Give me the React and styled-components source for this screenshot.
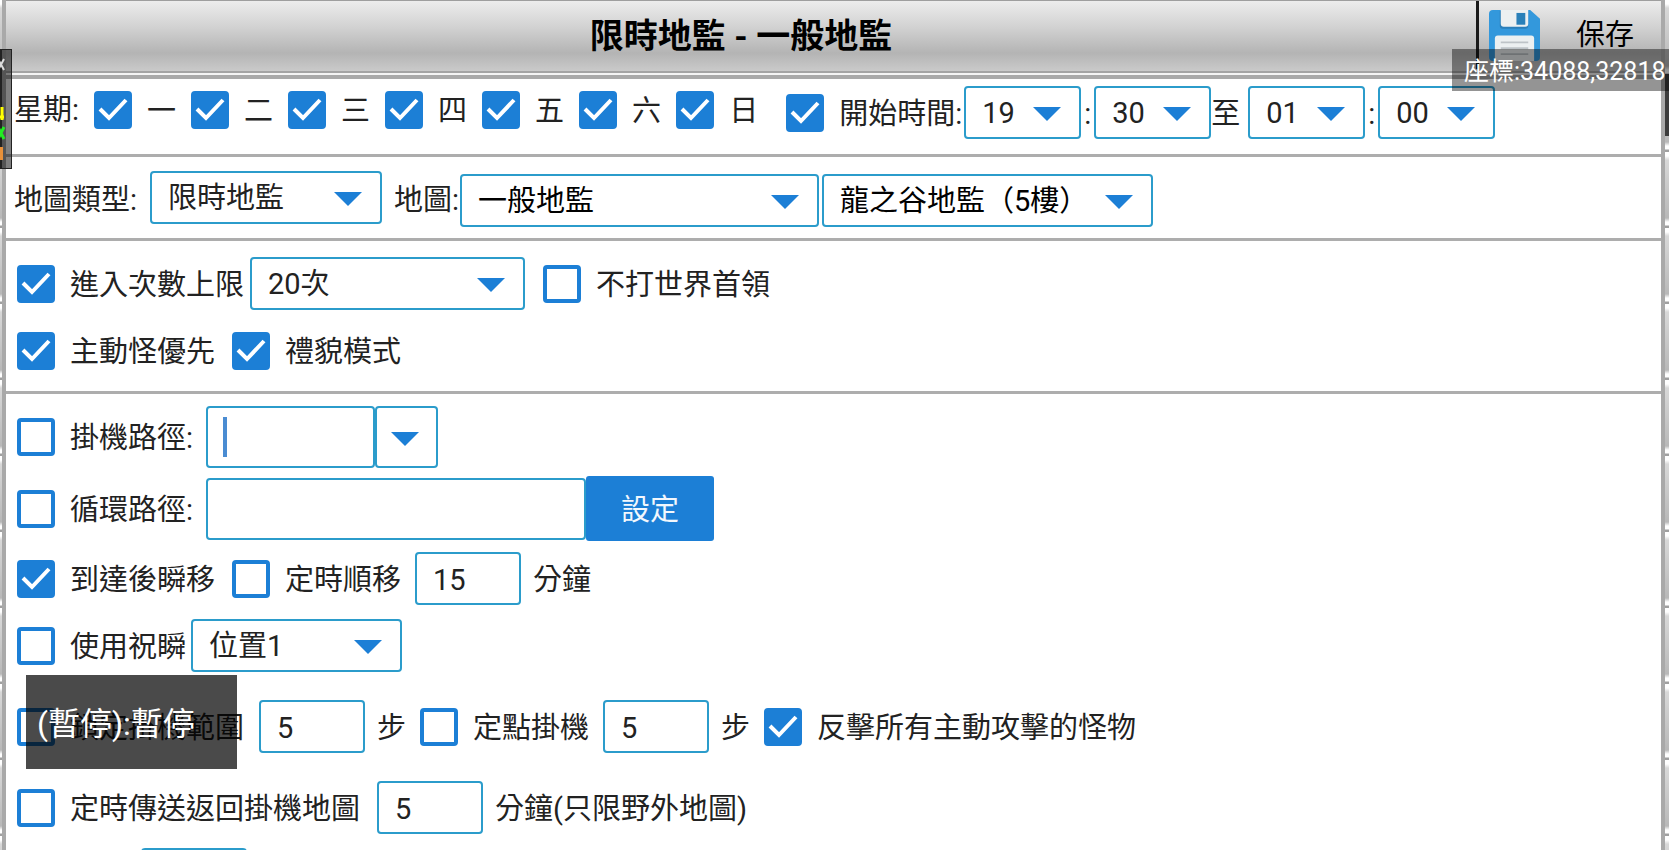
import React, { useState } from "react";
import styled, { createGlobalStyle, css } from "styled-components";

const blue = "#1c7fd6";
const edge = "#2b9ccb";
const rule = "#adadad";

const Global = createGlobalStyle`
  *, *::before, *::after { box-sizing: border-box; }
  html, body, #root { height: 100%; }
  body {
    margin: 0;
    overflow: hidden;
    background: #fff;
    color: #222;
    font: 400 29px/36px Roboto, "Noto Sans CJK TC", sans-serif;
  }
  button, input, select { font: inherit; color: inherit; margin: 0; }
`;

const Screen = styled.div`
  position: relative;
  display: flex;
  height: 100%;
  overflow: hidden;
`;

const Backdrop = styled.div`
  flex: 0 0 ${(p) => p.$w}px;
  background: repeating-linear-gradient(#fff 0 4px, #d8d8d8 8px, #b8b8b8 66px, #fff 70px 73px, #a0a0a0 74px 76px);
`;

const Dialog = styled.main`
  flex: 1;
  min-width: 0;
  border: solid #a9a9a9;
  border-width: 0 4px;
  background: #fff;
`;

const Header = styled.header`
  display: flex;
  height: 79px;
  border-top: 1px solid #9e9e9e;
  border-bottom: 4px solid #a9a9a9;
  background: linear-gradient(#ececec 0, #d2d2d2 26px, #b4b4b4 52px, #cacaca 70px, #a4a4a4 70px, #a4a4a4 72px, #f4f4f4 72px);
`;

const Title = styled.h1`
  flex: 1;
  margin: 0;
  text-align: center;
  font-size: 34px;
  font-weight: 700;
  line-height: 70px;
  color: #000;
`;

const SaveButton = styled.button`
  display: flex;
  align-items: center;
  justify-content: space-between;
  width: 185px;
  height: 68px;
  padding: 0 27px 0 10px;
  border: 0;
  border-left: 3px solid #1a1a1a;
  background: none;
  color: #000;
`;

const Section = styled.section`
  padding: ${(p) => p.$pad};
  border-bottom: ${(p) => (p.$last ? 0 : 3)}px solid ${rule};
`;

const Line = styled.div`
  display: flex;
  align-items: ${(p) => p.$align || "center"};
  min-height: ${(p) => p.$h || 53}px;
  margin-top: ${(p) => p.$gap || 0}px;
  white-space: nowrap;
`;

const Days = styled.fieldset`
  display: flex;
  align-items: center;
  gap: 15px;
  height: 48px;
  margin: 0 28px 0 0;
  padding: 0;
  border: 0;
`;

const Group = styled.div`
  display: flex;
  align-items: center;
  height: 53px;
`;

const Caption = styled.label`
  min-width: ${(p) => p.$w || 0}px;
  margin-left: ${(p) => p.$ml || 0}px;
  padding-top: 2px;
  text-align: ${(p) => p.$align || "left"};
`;

const Choice = styled.label`
  display: flex;
  align-items: center;
  gap: 15px;
  margin-right: ${(p) => p.$mr || 0}px;
`;

const ChoiceText = styled.span`
  min-width: ${(p) => p.$w || 0}px;
  padding-top: 2px;
`;

const Tick = styled.span`
  position: relative;
  display: block;
  width: 38px;
  height: 38px;

  input {
    appearance: none;
    display: block;
    width: 38px;
    height: 38px;
    border: 4px solid ${blue};
    border-radius: 4px;
    background: #fff;
  }
  input:checked { background: ${blue}; }
  svg {
    position: absolute;
    inset: 0;
    pointer-events: none;
    visibility: hidden;
  }
  input:checked + svg { visibility: visible; }
`;

const box = css`
  border: 2px solid ${edge};
  border-radius: 4px;
  background: #fff;
  outline: 0;
`;

const SelectWrap = styled.span`
  position: relative;
  display: block;
  width: ${(p) => p.$w}px;
  align-self: ${(p) => p.$align || "center"};
  margin-left: ${(p) => p.$ml || 0}px;
  color: ${(p) => (p.$dark ? "#000" : "#222")};

  select {
    ${box}
    appearance: none;
    display: block;
    width: 100%;
    height: 53px;
    padding: 0 48px 0 16px;
  }
  svg {
    position: absolute;
    right: 20px;
    top: 21px;
    pointer-events: none;
  }
`;

const Field = styled.input`
  ${box}
  width: ${(p) => p.$w || 106}px;
  height: ${(p) => p.$h || 53}px;
  margin-left: ${(p) => p.$ml || 0}px;
  padding: 2px 16px 0;
`;

const CaretField = styled.span`
  position: relative;
  display: block;

  &::after {
    content: "";
    position: absolute;
    left: 17px;
    top: 11px;
    width: 4px;
    height: 40px;
    background: #4a8cd2;
  }
`;

const DropButton = styled.button`
  ${box}
  display: flex;
  align-items: center;
  justify-content: center;
  width: 63px;
  height: 62px;
  padding: 4px 4px 0 0;
`;

const SetButton = styled.button`
  width: 128px;
  height: 65px;
  padding: 2px 0 0;
  border: 0;
  border-radius: 3px;
  background: ${blue};
  color: #f2f7fd;
`;

const Coords = styled.output`
  position: absolute;
  top: 49px;
  right: 0;
  width: 217px;
  height: 42px;
  padding: 0 12px;
  background: rgba(0, 0, 0, 0.42);
  color: #fff;
  font-size: 25px;
  line-height: 46px;
  white-space: nowrap;
`;

const Toast = styled.div`
  position: absolute;
  left: 26px;
  top: 675px;
  width: 211px;
  height: 94px;
  padding: 0 11px;
  background: rgba(0, 0, 0, 0.71);
  color: #fff;
  font-size: 32px;
  line-height: 98px;
  white-space: nowrap;
`;

const MiniPanel = styled.aside`
  position: absolute;
  left: -20px;
  top: 49px;
  width: 32px;
  height: 120px;
  border: 1px solid #222;
  background: linear-gradient(90deg, #222 0 21px, rgba(0, 0, 0, 0.5) 21px);
  overflow: hidden;

  svg { display: block; }
`;

const RightPanel = styled.aside`
  position: absolute;
  right: 0;
  top: 74px;
  width: 4px;
  height: 62px;
  background: #3c3c3c;
`;

const Arrow = () => (
  <svg width="28" height="14" viewBox="0 0 28 14" aria-hidden="true">
    <path d="M0 0H28L14 14Z" fill={blue} />
  </svg>
);

const Disk = () => (
  <svg width="51" height="51" viewBox="0 0 52 52" aria-hidden="true">
    <path d="M4 0H42L52 9V48Q52 52 48 52H4Q0 52 0 48V4Q0 0 4 0Z" fill="#3398dc" />
    <path d="M11 1H40V16Q40 19 37 19H14Q11 19 11 16Z" fill="#2a7fba" />
    <path d="M12 0H40V14Q40 17 37 17H15Q12 17 12 14Z" fill="#ecf0f1" />
    <rect x="28" y="3" width="9" height="12" fill="#2980b9" />
    <path d="M6 52V29Q6 26 9 26H43Q46 26 46 29V52Z" fill="#ecf0f1" />
    <path d="M12 33H40M12 39H40M12 45H40" stroke="#bdc3c7" strokeWidth="2" />
  </svg>
);

function Check({ label, on, w, mr }) {
  const [checked, setChecked] = useState(!!on);
  return (
    <Choice $mr={mr}>
      <Tick>
        <input type="checkbox" checked={checked} onChange={(e) => setChecked(e.target.checked)} />
        <svg width="38" height="38" viewBox="0 0 38 38" aria-hidden="true">
          <path d="M6 18L15 27L32 9" fill="none" stroke="#fff" strokeWidth="4" />
        </svg>
      </Tick>
      <ChoiceText $w={w}>{label}</ChoiceText>
    </Choice>
  );
}

function Select({ id, name, value, w, ml, dark, align }) {
  return (
    <SelectWrap $w={w} $ml={ml} $dark={dark} $align={align}>
      <select id={id} aria-label={name} defaultValue={value}>
        <option>{value}</option>
      </select>
      <Arrow />
    </SelectWrap>
  );
}

export default function App() {
  return (
    <>
      <Global />
      <Screen>
        <Backdrop $w={2} />
        <Dialog>
          <Header>
            <Title>限時地監 - 一般地監</Title>
            <SaveButton type="button">
              <Disk />
              <span>保存</span>
            </SaveButton>
          </Header>

          <Section $pad="7px 8px 15px">
            <Line $align="flex-start">
              <Days>
                <span>星期:</span>
                {["一", "二", "三", "四", "五", "六", "日"].map((d) => (
                  <Check key={d} label={d} on />
                ))}
              </Days>
              <Group>
                <Check label="開始時間:" on w={125} />
                <Select name="開始時" value="19" w={117} />
                <Caption as="span" $w={13} $align="center">:</Caption>
                <Select name="開始分" value="30" w={117} />
                <Caption as="span" $w={37}>至</Caption>
                <Select name="結束時" value="01" w={117} />
                <Caption as="span" $w={13} $align="center">:</Caption>
                <Select name="結束分" value="00" w={117} />
              </Group>
            </Line>
          </Section>

          <Section $pad="14px 8px 11px">
            <Line $h={56}>
              <Caption htmlFor="kind" $w={136}>地圖類型:</Caption>
              <Select id="kind" value="限時地監" w={232} align="flex-start" />
              <Caption htmlFor="map" $w={66} $ml={12}>地圖:</Caption>
              <Select id="map" value="一般地監" w={359} dark align="flex-end" />
              <Select name="樓層" value="龍之谷地監（5樓）" w={331} ml={3} dark align="flex-end" />
            </Line>
          </Section>

          <Section $pad="16px 11px 14px">
            <Line>
              <Check label="進入次數上限" on w={180} />
              <Select name="次數" value="20次" w={275} />
              <Caption as="span" $w={18} />
              <Check label="不打世界首領" />
            </Line>
            <Line $gap={14}>
              <Check label="主動怪優先" on w={147} mr={15} />
              <Check label="禮貌模式" on />
            </Line>
          </Section>

          <Section $pad="12px 11px" $last>
            <Line $h={62}>
              <Check label="掛機路徑:" w={136} />
              <CaretField>
                <Field $w={169} $h={62} aria-label="掛機路徑" />
              </CaretField>
              <DropButton type="button" aria-label="選擇路徑">
                <Arrow />
              </DropButton>
            </Line>
            <Line $h={65} $gap={8}>
              <Check label="循環路徑:" w={136} />
              <Field $w={380} $h={62} aria-label="循環路徑" />
              <SetButton type="button">設定</SetButton>
            </Line>
            <Line $gap={11}>
              <Check label="到達後瞬移" on w={147} mr={15} />
              <Check label="定時順移" w={118} />
              <Field $ml={12} defaultValue="15" aria-label="分鐘" />
              <Caption as="span" $ml={12}>分鐘</Caption>
            </Line>
            <Line $gap={14}>
              <Check label="使用祝瞬" w={121} />
              <Select name="位置" value="位置1" w={211} />
            </Line>
            <Line $gap={28}>
              <Check label="鎖定掛機範圍" w={177} />
              <Field $ml={12} defaultValue="5" aria-label="範圍步數" />
              <Caption as="span" $w={43} $ml={12}>步</Caption>
              <Check label="定點掛機" w={118} />
              <Field $ml={12} defaultValue="5" aria-label="定點步數" />
              <Caption as="span" $w={43} $ml={12}>步</Caption>
              <Check label="反擊所有主動攻擊的怪物" on />
            </Line>
            <Line $gap={28}>
              <Check label="定時傳送返回掛機地圖" w={295} />
              <Field $ml={12} defaultValue="5" aria-label="返回分鐘" />
              <Caption as="span" $ml={12}>分鐘(只限野外地圖)</Caption>
            </Line>
            <Line $gap={14}>
              <Caption as="span" $w={124} />
              <Field aria-label="數值" />
            </Line>
          </Section>
        </Dialog>
        <Backdrop $w={4} />

        <RightPanel />
        <MiniPanel>
          <svg width="30" height="118" viewBox="-19 50 30 118" aria-hidden="true">
            <path d="M-2 59L4 70M4 59L-2 70" stroke="#ddd" strokeWidth="2" />
            <path d="M-1 117H4M2 107V120" stroke="#ff0" strokeWidth="3" />
            <path d="M-2 127L4 139M4 127L-2 139" stroke="#2e2" strokeWidth="3" />
            <rect x="-10" y="147" width="13" height="13" fill="#e8913a" />
          </svg>
        </MiniPanel>
        <Coords>座標:34088,32818</Coords>
        <Toast>(暫停):暫停</Toast>
      </Screen>
    </>
  );
}
